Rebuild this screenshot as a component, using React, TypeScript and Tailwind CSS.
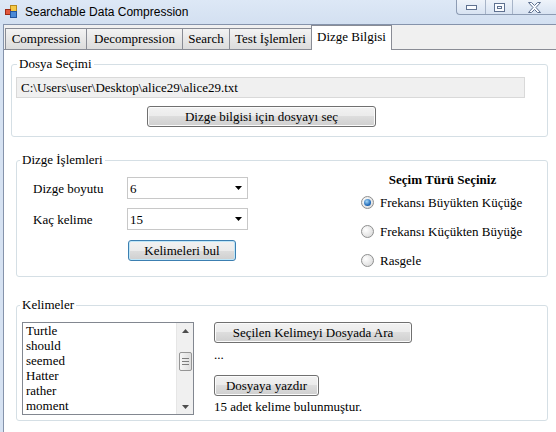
import React from 'react';

// Win7 style form: "Dizge Bilgisi" tab

function AppIcon() {
  return (
    <svg width="14" height="14" viewBox="0 0 14 14" className="mt-[5px] ml-[4px] shrink-0">
      <rect x="6.5" y="0.5" width="6" height="6" fill="#f6c945" stroke="#b78a1c" />
      <rect x="1.5" y="4.5" width="5" height="5" fill="#e2573d" stroke="#9d2c17" />
      <rect x="6.5" y="6.5" width="6" height="6" fill="#4c8ad6" stroke="#23559f" />
    </svg>
  );
}

function CaptionButtons() {
  return (
    <div className="ml-auto flex h-[15px] self-start rounded-bl-[4px] border-l border-b border-[#8d9cb4] bg-linear-to-b from-[#eef3fa] to-[#d8e3f2]">
      <div className="w-[29px] flex items-center justify-center border-r border-[#a7b4c8]">
        <svg width="11" height="5" viewBox="0 0 11 5">
          <rect x="0.5" y="0.5" width="10" height="4" fill="#fafcff" stroke="#5f7190" />
        </svg>
      </div>
      <div className="w-[27px] flex items-center justify-center border-r border-[#a7b4c8]">
        <svg width="11" height="9" viewBox="0 0 11 9">
          <rect x="0.5" y="0.5" width="10" height="8" fill="#fafcff" stroke="#5f7190" />
          <rect x="3.5" y="3.5" width="4" height="2" fill="none" stroke="#5f7190" />
        </svg>
      </div>
      <div className="w-[43px] flex items-center justify-center">
        <svg width="13" height="11" viewBox="0 0 13 11">
          <path
            d="M0.5 0.5h3l3 3 3-3h3l-4.5 5 4.5 5h-3l-3-3-3 3h-3l4.5-5z"
            fill="#fafcff"
            stroke="#5f7190"
            strokeLinejoin="round"
          />
        </svg>
      </div>
    </div>
  );
}

function TitleBar() {
  return (
    <div className="h-[24px] flex bg-linear-to-b from-[#dde8f6] to-[#d3e0f1]">
      <AppIcon />
      <span className="ml-[7px] mt-[4px] font-['Liberation_Sans',Arial,sans-serif] text-[12px] leading-[16px] text-black">
        Searchable Data Compression
      </span>
      <CaptionButtons />
    </div>
  );
}

const TABS = [
  { label: 'Compression', w: 'w-[82px]' },
  { label: 'Decompression', w: 'w-[97px]' },
  { label: 'Search', w: 'w-[48px]' },
  { label: 'Test İşlemleri', w: 'w-[83px]' },
];

function TabStrip() {
  return (
    <div className="h-[24px] flex items-end pl-[1px]">
      {TABS.map((t, i) => (
        <div
          key={t.label}
          className={`${t.w} h-[21px] flex items-center justify-center border border-b-0 border-[#898c95] bg-linear-to-b from-[#f3f3f3] to-[#dcdcdc] ${i > 0 ? '-ml-px' : ''}`}
        >
          {t.label}
        </div>
      ))}
      <div className="relative z-10 -ml-px -mb-px w-[81px] h-[25px] flex items-center justify-center border border-b-0 border-[#898c95] bg-white pb-[3px]">
        Dizge Bilgisi
      </div>
    </div>
  );
}

function WinButton({
  children,
  width,
  focused = false,
}: {
  children: React.ReactNode;
  width: string;
  focused?: boolean;
}) {
  return (
    <div
      className={`${width} h-[21px] flex items-center justify-center rounded-[3px] border whitespace-nowrap leading-[15px] bg-[linear-gradient(to_bottom,#f2f2f2_0%,#ebebeb_50%,#dddddd_50%,#cfcfcf_100%)] ${
        focused
          ? 'border-[#3c7fb1] shadow-[inset_0_0_0_1px_#bfe6f8]'
          : 'border-[#707070] shadow-[inset_0_0_0_1px_#fbfbfb]'
      }`}
    >
      {children}
    </div>
  );
}

function Combo({ value }: { value: string }) {
  return (
    <div className="w-[121px] h-[22px] flex items-center border border-[#c8c8c8] bg-white pl-[2px] pr-[5px]">
      <span className="flex-1 leading-[15px]">{value}</span>
      <svg width="7" height="4" viewBox="0 0 7 4">
        <path d="M0 0h7L3.5 4z" fill="#000" />
      </svg>
    </div>
  );
}

function Radio({ label, checked = false }: { label: string; checked?: boolean }) {
  return (
    <div className="h-[15px] flex items-center gap-[6px]">
      <span className="w-[13px] h-[13px] shrink-0 rounded-full border border-[#8e8f8f] bg-[radial-gradient(circle_at_35%_35%,#ffffff,#d4d4d4)] flex items-center justify-center">
        {checked && (
          <span className="w-[7px] h-[7px] rounded-full bg-[radial-gradient(circle_at_40%_35%,#a6d8f8,#1c66b6_65%,#0c4886)]" />
        )}
      </span>
      <span className="leading-[15px] whitespace-nowrap">{label}</span>
    </div>
  );
}

const WORDS = ['Turtle', 'should', 'seemed', 'Hatter', 'rather', 'moment'];

function WordList() {
  return (
    <div className="ml-[5px] w-[172px] h-[93px] flex border border-[#828790] bg-white">
      <div className="flex-1 pl-[3px]">
        {WORDS.map((w) => (
          <div key={w} className="h-[15px] leading-[15px]">
            {w}
          </div>
        ))}
      </div>
      <div className="w-[17px] flex flex-col items-center bg-[#f0f0f0] border-l border-[#e6e6e6]">
        <svg width="7" height="4" viewBox="0 0 7 4" className="mt-[6px]">
          <path d="M0 4h7L3.5 0z" fill="#4d4d4d" />
        </svg>
        <div className="mt-[19px] w-[13px] h-[19px] rounded-[2px] border border-[#959595] bg-linear-to-r from-[#f5f5f5] to-[#dedede] flex flex-col items-center justify-center gap-[2px]">
          <span className="w-[7px] h-px bg-[#7c7c7c]" />
          <span className="w-[7px] h-px bg-[#7c7c7c]" />
          <span className="w-[7px] h-px bg-[#7c7c7c]" />
        </div>
        <svg width="7" height="4" viewBox="0 0 7 4" className="mt-auto mb-[5px]">
          <path d="M0 0h7L3.5 4z" fill="#4d4d4d" />
        </svg>
      </div>
    </div>
  );
}

function TabPage() {
  return (
    <div className="flex-1 flex flex-col bg-white border-t border-[#898c95] pt-[7px]">
      {/* Dosya Seçimi */}
      <fieldset className="ml-[7px] w-[537px] rounded-[3px] border border-[#d5dfe5] pb-[9px]">
        <legend className="ml-[5px] px-[2px] leading-[14px]">Dosya Seçimi</legend>
        <div className="mt-[6px] ml-[4px] w-[509px] h-[21px] flex items-center border border-[#d9d9d9] bg-[#f0f0f0] pl-[4px] leading-[15px]">
          C:\Users\user\Desktop\alice29\alice29.txt
        </div>
        <div className="mt-[8px] ml-[135px]">
          <WinButton width="w-[229px]">Dizge bilgisi için dosyayı seç</WinButton>
        </div>
      </fieldset>

      {/* Dizge İşlemleri */}
      <fieldset className="mt-[16px] ml-[12px] w-[532px] rounded-[3px] border border-[#d5dfe5] pb-[8px]">
        <legend className="ml-[3px] px-[2px] leading-[14px]">Dizge İşlemleri</legend>
        <div className="flex">
          <div className="w-[231px] pl-[16px] pt-[10px] flex flex-col">
            <div className="flex items-center">
              <span className="w-[94px] leading-[15px]">Dizge boyutu</span>
              <Combo value="6" />
            </div>
            <div className="mt-[9px] flex items-center">
              <span className="w-[94px] leading-[15px]">Kaç kelime</span>
              <Combo value="15" />
            </div>
            <div className="mt-[10px] ml-[95px]">
              <WinButton width="w-[108px]" focused>
                Kelimeleri bul
              </WinButton>
            </div>
          </div>
          <div className="ml-[113px] w-[163px] pt-[5px] flex flex-col">
            <div className="text-center font-bold leading-[15px]">Seçim Türü Seçiniz</div>
            <div className="mt-[8px] flex flex-col gap-[14px]">
              <Radio label="Frekansı Büyükten Küçüğe" checked />
              <Radio label="Frekansı Küçükten Büyüğe" />
              <Radio label="Rasgele" />
            </div>
          </div>
        </div>
      </fieldset>

      {/* Kelimeler */}
      <fieldset className="mt-[21px] ml-[12px] w-[532px] rounded-[3px] border border-[#d5dfe5] pb-[5px]">
        <legend className="ml-[3px] px-[2px] leading-[14px]">Kelimeler</legend>
        <div className="mt-[10px] flex">
          <WordList />
          <div className="ml-[20px] flex flex-col">
            <WinButton width="w-[198px]">Seçilen Kelimeyi Dosyada Ara</WinButton>
            <div className="mt-[4px] leading-[15px]">...</div>
            <div className="mt-[13px]">
              <WinButton width="w-[105px]">Dosyaya yazdır</WinButton>
            </div>
            <div className="mt-[3px] leading-[15px] whitespace-nowrap">15 adet kelime bulunmuştur.</div>
          </div>
        </div>
      </fieldset>
    </div>
  );
}

export default function App() {
  return (
    <div className="w-[556px] h-[432px] overflow-hidden flex flex-col bg-[#d6e2f2] font-['Liberation_Serif','Times_New_Roman',serif] text-[13px] text-black">
      <TitleBar />
      <div className="flex-1 flex min-h-0">
        <div className="w-[3px] bg-[#d6e2f2]" />
        <div className="flex-1 min-w-0 flex flex-col border-t border-l border-[#8593ab] bg-[#f0f0f0]">
          <TabStrip />
          <TabPage />
        </div>
      </div>
    </div>
  );
}
